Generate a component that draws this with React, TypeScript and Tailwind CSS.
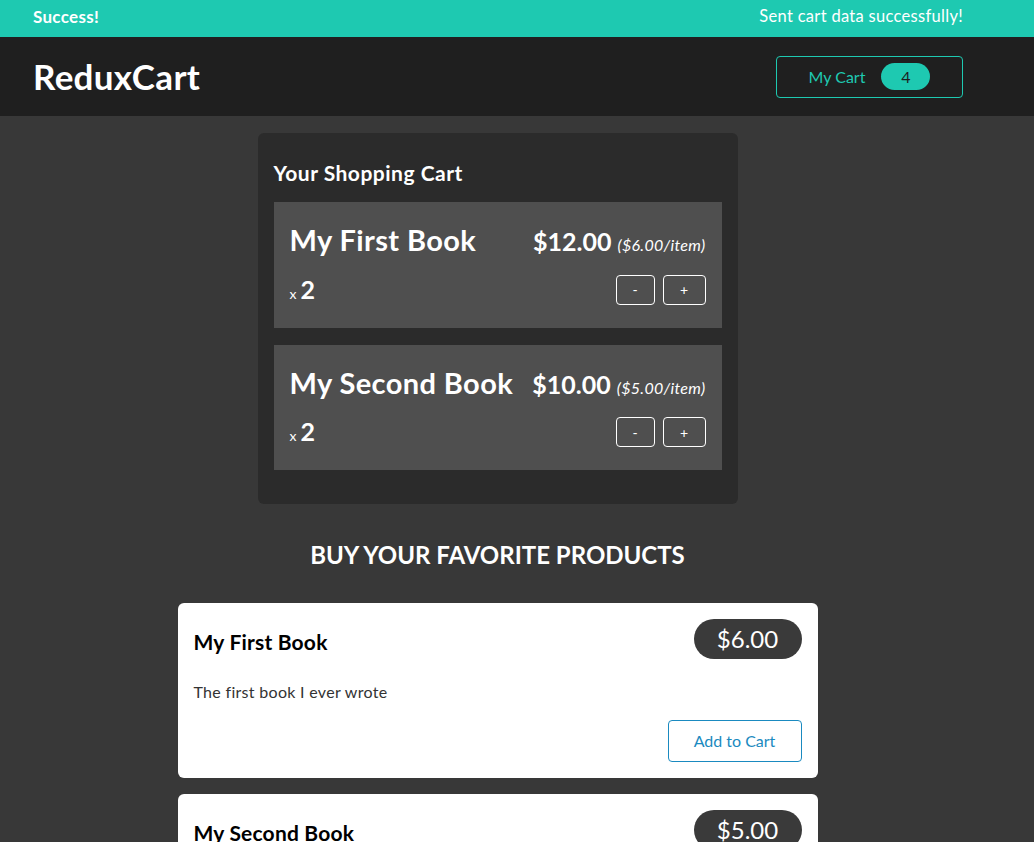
import React from "react";

const font = { fontFamily: "Lato, 'Noto Sans', sans-serif" };

function CartItem({ title, total, price, qty }: { title: string; total: string; price: string; qty: number }) {
  return (
    <li className="bg-[#4f4f4f] px-4 pt-[18px] pb-[23px]">
      <header className="flex items-baseline justify-between">
        <h3 className="text-[29px] font-bold leading-[40px] tracking-[0.4px] text-white">{title}</h3>
        <div className="text-[25px] font-bold text-white">
          {total}{" "}
          <span className="text-[16px] font-normal italic tracking-[0.3px]">({price}/item)</span>
        </div>
      </header>
      <div className="mt-[14px] flex items-center justify-between">
        <div className="text-white">
          <span className="mr-[4px] text-[14px]">x</span>
          <span className="text-[25px] font-bold leading-[28px]">{qty}</span>
        </div>
        <div className="flex gap-[8px]">
          <button className="h-[30px] w-[39px] rounded-[4px] border border-white text-[14px] text-white">-</button>
          <button className="h-[30px] w-[43px] rounded-[4px] border border-white text-[14px] text-white">+</button>
        </div>
      </div>
    </li>
  );
}

function Product({ title, price, desc }: { title: string; price: string; desc: string }) {
  return (
    <li className="rounded-[6px] bg-white px-4 pt-[16px] pb-[16px]">
      <header className="flex items-center justify-between">
        <h3 className="pt-[5px] text-[21px] font-bold tracking-[0.2px] text-black">{title}</h3>
        <div className="flex h-[40px] w-[108px] items-center justify-center rounded-full bg-[#3a3a3a] text-[24px] text-white">
          {price}
        </div>
      </header>
      <p className="mt-[21px] text-[16px] tracking-[0.3px] text-[#333]">{desc}</p>
      <div className="mt-[16px] flex justify-end">
        <button className="h-[42px] w-[134px] rounded-[4px] border border-[#1a8ac0] text-[16px] text-[#1a8ac0]">Add to Cart</button>
      </div>
    </li>
  );
}

export default function App() {
  return (
    <div className="min-h-[842px] bg-[#383838]" style={font}>
      <div className="bg-[#1ec9b1]">
        <div className="flex h-[37px] w-[995px] items-start justify-between pl-[33px] pr-[32px] pt-[4px] text-white">
          <h2 className="text-[17px] font-bold tracking-[0.3px]">Success!</h2>
          <p className="text-[16.5px] tracking-[0.3px]">Sent cart data successfully!</p>
        </div>
      </div>
      <header className="bg-[#1f1f1f]">
        <div className="flex h-[79px] w-[995px] items-center justify-between pl-[33px] pr-[32px]">
          <h1 className="text-[35px] font-bold tracking-[0.3px] text-white">ReduxCart</h1>
          <button className="flex h-[42px] w-[187px] items-center justify-center gap-[16px] rounded-[4px] border border-[#1ec9b1] text-[16px] text-[#1ec9b1]">
            <span>My Cart</span>
            <span className="flex h-[27px] w-[49px] items-center justify-center rounded-full bg-[#1ec9b1] text-[#1e1e1e]">4</span>
          </button>
        </div>
      </header>
      <main className="flex w-[995px] flex-col items-center pt-[17px]">
        <section className="w-[480px] rounded-[6px] bg-[#2b2b2b] px-4 pt-[26px] pb-[34px]">
          <h2 className="text-[21px] font-bold leading-[28px] tracking-[0.5px] text-white">Your Shopping Cart</h2>
          <ul className="mt-[15px] flex flex-col gap-[17px]">
            <CartItem title="My First Book" total="$12.00" price="$6.00" qty={2} />
            <CartItem title="My Second Book" total="$10.00" price="$5.00" qty={2} />
          </ul>
        </section>
        <section className="mt-[33px] w-[640px]">
          <h2 className="text-center text-[24px] font-bold uppercase leading-[36px] text-white">Buy your favorite products</h2>
          <ul className="mt-[30px] flex flex-col gap-[16px]">
            <Product title="My First Book" price="$6.00" desc="The first book I ever wrote" />
            <Product title="My Second Book" price="$5.00" desc="The second book I ever wrote" />
          </ul>
        </section>
      </main>
    </div>
  );
}
